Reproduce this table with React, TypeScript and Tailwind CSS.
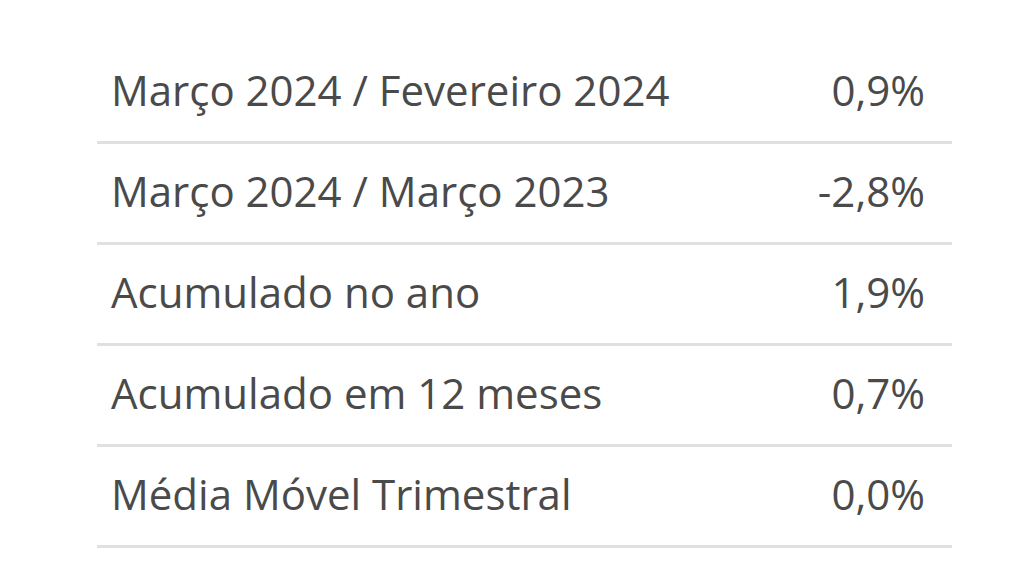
const rows = [
  { label: "Março 2024 / Fevereiro 2024", value: "0,9%" },
  { label: "Março 2024 / Março 2023", value: "-2,8%" },
  { label: "Acumulado no ano", value: "1,9%" },
  { label: "Acumulado em 12 meses", value: "0,7%" },
  { label: "Média Móvel Trimestral", value: "0,0%" },
];

export default function App() {
  return (
    <div className="w-[1029px] h-[568px] bg-white pt-[43px] pl-[97px] overflow-hidden" style={{ fontFamily: '"Open Sans", sans-serif' }}>
      <div className="w-[855px]">
        {rows.map((row) => (
          <div
            key={row.label}
            className="flex h-[101px] items-center justify-between border-b-[3px] border-[#e0e0e0] pb-[6px] pl-[14px] pr-[27px] text-[42px] text-[#4a4a4a]"
          >
            <span>{row.label}</span>
            <span>{row.value}</span>
          </div>
        ))}
      </div>
    </div>
  );
}
